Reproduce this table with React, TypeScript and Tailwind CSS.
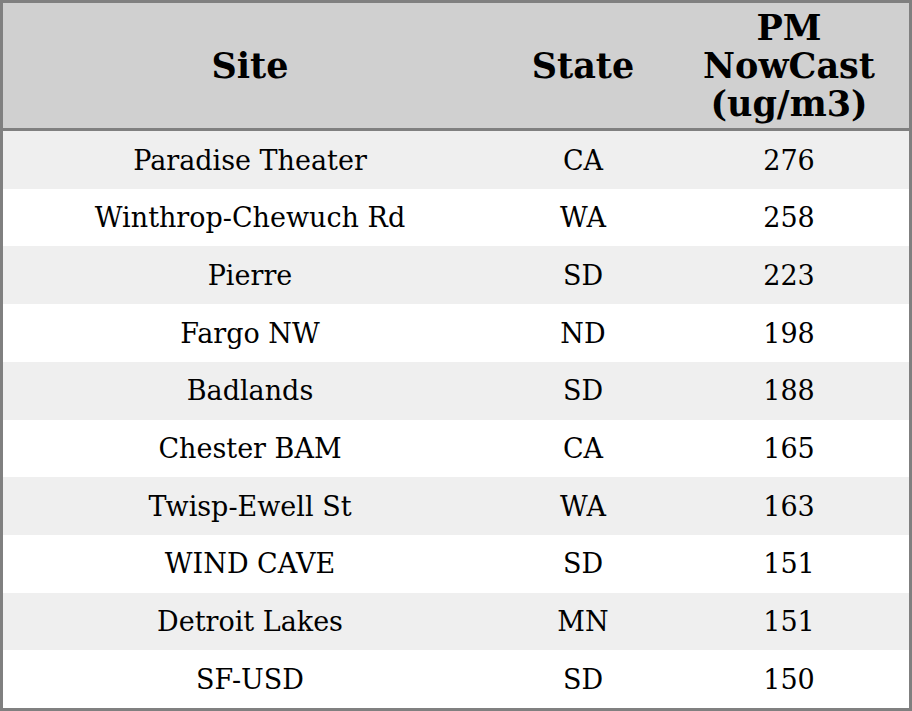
import React from "react"

const rows: [string, string, number][] = [
  ["Paradise Theater", "CA", 276],
  ["Winthrop-Chewuch Rd", "WA", 258],
  ["Pierre", "SD", 223],
  ["Fargo NW", "ND", 198],
  ["Badlands", "SD", 188],
  ["Chester BAM", "CA", 165],
  ["Twisp-Ewell St", "WA", 163],
  ["WIND CAVE", "SD", 151],
  ["Detroit Lakes", "MN", 151],
  ["SF-USD", "SD", 150],
]

export default function App() {
  return (
    <div
      className="w-[912px] h-[711px] bg-white border-[3px] border-[#808080] flex flex-col text-black"
      style={{ fontFamily: '"DejaVu Serif", serif' }}
    >
      {/* header */}
      <div className="grid grid-cols-[494px_172px_1fr] h-[128px] shrink-0 bg-[#d0d0d0] border-b-[3px] border-[#808080] font-bold text-[35px] leading-[38px]">
        <div className="flex items-center justify-center text-center">Site</div>
        <div className="flex items-center justify-center text-center">State</div>
        <div className="flex items-center justify-center text-center">
          PM
          <br />
          NowCast
          <br />
          (ug/m3)
        </div>
      </div>

      {/* body */}
      <div className="flex-1 grid grid-rows-10 text-[27px]">
        {rows.map(([site, state, value], i) => (
          <div
            key={i}
            className={
              "grid grid-cols-[494px_172px_1fr] items-center text-center pt-[2px] " +
              (i % 2 === 0 ? "bg-[#efefef]" : "bg-white")
            }
          >
            <div>{site}</div>
            <div>{state}</div>
            <div>{value}</div>
          </div>
        ))}
      </div>
    </div>
  )
}
